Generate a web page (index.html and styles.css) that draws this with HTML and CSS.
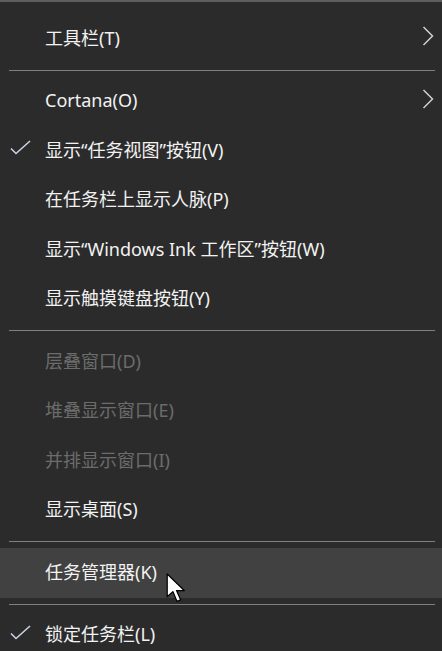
FILE: index.html
```html
<!DOCTYPE html>
<html lang="zh-CN">
<head>
<meta charset="utf-8">
<link rel="stylesheet" href="styles.css">
</head>
<body>
<div class="menu">
  <div class="item"><span class="label">工具栏(T)</span>
    <svg class="chev" width="12" height="20" viewBox="0 0 12 20"><path d="M1.5 1 L10.5 10 L1.5 19" fill="none" stroke="#cfcfd4" stroke-width="1.5"/></svg>
  </div>
  <div class="sep"><div class="line"></div></div>
  <div class="item"><span class="label">Cortana(O)</span>
    <svg class="chev" width="12" height="20" viewBox="0 0 12 20"><path d="M1.5 1 L10.5 10 L1.5 19" fill="none" stroke="#cfcfd4" stroke-width="1.5"/></svg>
  </div>
  <div class="item"><svg class="check" width="22" height="16" viewBox="0 0 22 16"><path d="M1 8.5 L6 13.5 L20 1" fill="none" stroke="#c9d2e3" stroke-width="1.6"/></svg><span class="label">显示“任务视图”按钮(V)</span></div>
  <div class="item"><span class="label">在任务栏上显示人脉(P)</span></div>
  <div class="item"><span class="label">显示“Windows Ink 工作区”按钮(W)</span></div>
  <div class="item"><span class="label">显示触摸键盘按钮(Y)</span></div>
  <div class="sep"><div class="line"></div></div>
  <div class="item disabled"><span class="label">层叠窗口(D)</span></div>
  <div class="item disabled"><span class="label">堆叠显示窗口(E)</span></div>
  <div class="item disabled"><span class="label">并排显示窗口(I)</span></div>
  <div class="item"><span class="label">显示桌面(S)</span></div>
  <div class="sep"><div class="line"></div></div>
  <div class="item hover"><span class="label">任务管理器(K)</span>
    <svg class="cursor" width="21" height="31" viewBox="0 0 20 30"><path d="M1 1 L1 23 L6.5 18 L10.5 27.5 L14 26 L10 17 L17.5 17 Z" fill="#ffffff" stroke="#000000" stroke-width="1.2" stroke-linejoin="round"/></svg>
  </div>
  <div class="sep"><div class="line"></div></div>
  <div class="item"><svg class="check" width="22" height="16" viewBox="0 0 22 16"><path d="M1 8.5 L6 13.5 L20 1" fill="none" stroke="#c9d2e3" stroke-width="1.6"/></svg><span class="label">锁定任务栏(L)</span></div>
</div>
</body>
</html>
```
FILE: styles.css
```css
html, body {
  margin: 0;
  padding: 0;
  background: #2b2b2b;
  overflow: hidden;
}
.menu {
  width: 442px;
  height: 651px;
  box-sizing: border-box;
  border-top: 2px solid #5f5f5f;
  padding-top: 12px;
  background: #2b2b2b;
  font-family: "Noto Sans", "Noto Sans CJK SC", sans-serif;
  font-size: 18px;
  color: #f2f2f2;
}
.item {
  position: relative;
  height: 49.5px;
  display: flex;
  align-items: center;
  padding-left: 45px;
}
.item.disabled {
  color: #6c6c6c;
}
.item.hover {
  background: #414141;
}
.label {
  white-space: nowrap;
  line-height: 1;
  padding-bottom: 2px;
}
.check {
  position: absolute;
  left: 10px;
  top: 14px;
}
.chev {
  position: absolute;
  right: 8px;
  top: 12px;
}
.cursor {
  position: absolute;
  left: 166px;
  top: 25px;
}
.sep {
  height: 13px;
  display: flex;
  align-items: center;
  padding: 0 7px 0 9px;
}
.line {
  flex: 1;
  height: 1px;
  background: #808080;
}
```
